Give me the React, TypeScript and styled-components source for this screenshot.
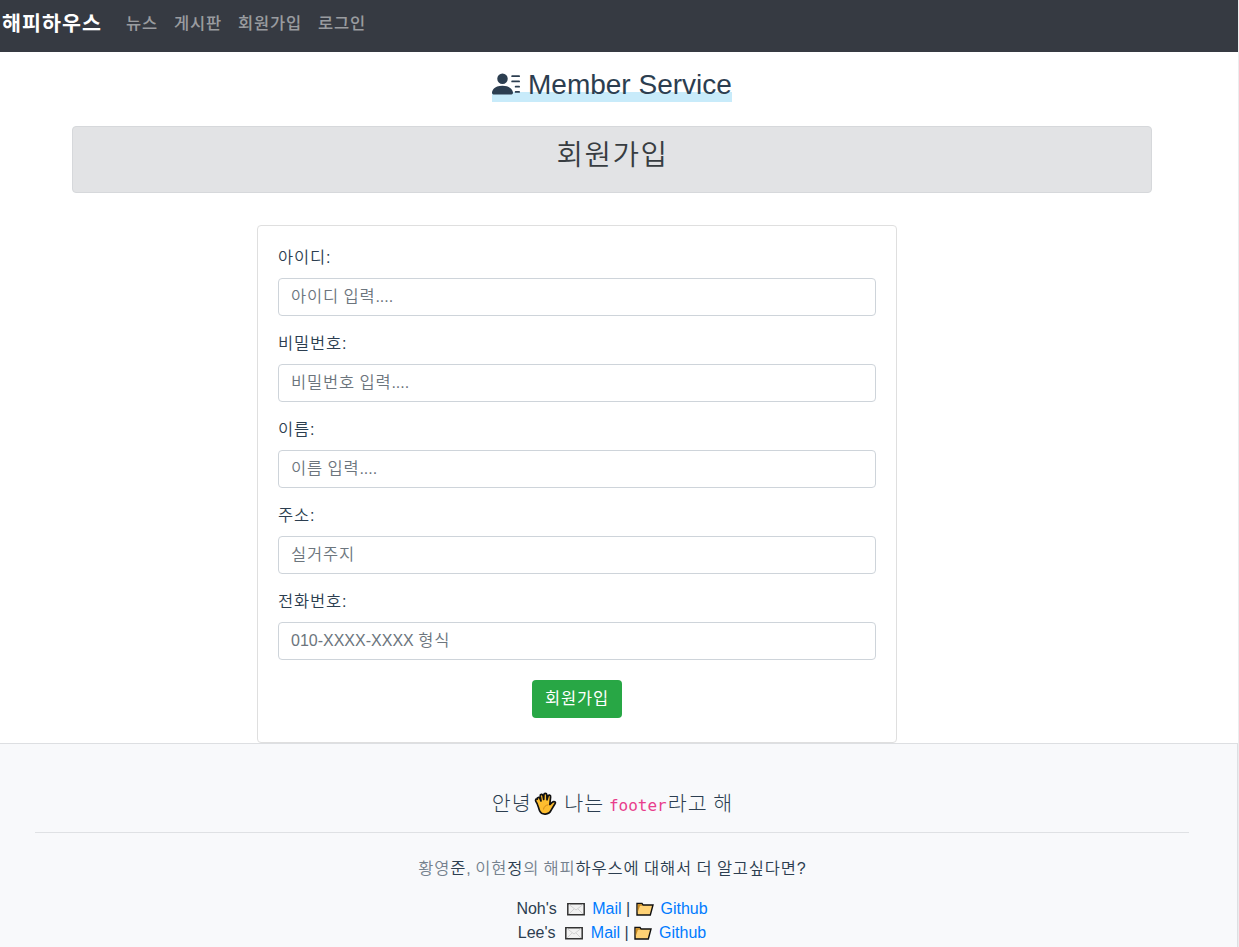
import React from "react";
import styled, { createGlobalStyle } from "styled-components";
import { BsPersonLinesFill } from "react-icons/bs";

const GlobalStyle = createGlobalStyle`
  * { box-sizing: border-box; }
  body {
    margin: 0;
    overflow: hidden;
    background: #fff;
    color: #2c3e50;
    font-family: "Liberation Sans", "Noto Sans CJK KR", sans-serif;
    font-size: 16px;
    line-height: 24px;
  }
`;

const Page = styled.div`
  display: flex;
  flex-direction: column;
  height: 947px;
  border-right: 1px solid #ececee;
`;

const Hangul = styled.span`
  font-size: 1.03em;
  letter-spacing: 0.0509em;
`;

const Navbar = styled.nav`
  display: flex;
  align-items: flex-start;
  gap: 16px;
  flex: none;
  height: 52px;
  padding: 11px 2px 0;
  background: #363a42;
  font-weight: 500;
`;

const Brand = styled.a`
  height: 24px;
  margin-right: 8px;
  color: #fff;
  font-size: 20px;
  font-weight: 700;
  line-height: 26px;
`;

const NavLink = styled.a`
  color: rgba(255, 255, 255, 0.5);
`;

const Container = styled.main`
  display: flex;
  flex-direction: column;
  align-items: center;
  flex: none;
  width: 1080px;
  height: 691px;
  margin-left: 72px;
  padding-top: 16px;
`;

const Title = styled.h2`
  display: flex;
  gap: 8px;
  width: 240px;
  height: 34px;
  margin: 0 0 24px;
  background: linear-gradient(to top, #c8ebfa 10px, transparent 10px);
  font-size: 28px;
  font-weight: 400;
  line-height: 33px;
  white-space: nowrap;

  svg {
    flex: none;
    margin-top: 2px;
  }
`;

const Banner = styled.div`
  width: 100%;
  height: 67px;
  margin-bottom: 32px;
  padding: 11px 0 0 1px;
  border: 1px solid #d6d8db;
  border-radius: 4px;
  background: #e2e3e5;
  color: #383d41;
  font-size: 28px;
  font-weight: 350;
  line-height: 34px;
  text-align: center;
`;

const Card = styled.form`
  display: flex;
  flex-direction: column;
  gap: 16px;
  width: 640px;
  height: 518px;
  margin-right: 70px;
  padding: 20px;
  border: 1px solid #dfdfdf;
  border-radius: 4px;
  font-weight: 350;
`;

const Group = styled.label`
  display: flex;
  flex-direction: column;
  gap: 8px;
`;

const Caption = styled.span`
  height: 24px;
  line-height: 22px;
`;

const Field = styled.span`
  display: grid;
  height: 38px;
  border: 1px solid #ced4da;
  border-radius: 4px;
`;

const Input = styled.input`
  grid-area: 1 / 1;
  min-width: 0;
  padding: 6px 12px;
  border: 0;
  background: transparent;
  font: inherit;
`;

const Hint = styled.span`
  grid-area: 1 / 1;
  padding: 5px 12px;
  color: #6c757d;
`;

const Submit = styled.button`
  align-self: center;
  width: 90px;
  height: 38px;
  margin-top: 4px;
  padding: 0 0 4px;
  border: 0;
  border-radius: 4px;
  background: #28a745;
  color: #fff;
  font: 400 16px/24px "Noto Sans CJK KR", sans-serif;
`;

const Footer = styled.footer`
  flex: 1;
  padding: 48px 48px 0 35px;
  border: 1px solid #dddfe2;
  border-width: 1px 1px 0 0;
  background: #f8f9fb;
  font-weight: 350;
  text-align: center;
`;

const Greeting = styled.div`
  display: flex;
  justify-content: center;
  height: 24px;
  padding-left: 1px;
  font-size: 20px;
  font-weight: 300;
  white-space: pre;

  svg {
    margin: 0 2px 0 2px;
  }
`;

const Code = styled.code`
  margin: 0 1px 0 -1px;
  color: #e83e8c;
  font: 400 16px/27px "DejaVu Sans Mono", monospace;
`;

const Divider = styled.hr`
  margin: 16px 0 23px;
  border: 0;
  border-top: 1px solid #dfe1e4;
`;

const Question = styled.p`
  height: 24px;
  margin: 0 0 17px;
`;

const Muted = styled.span`
  color: #75818d;
`;

const ContactRow = styled.div`
  display: flex;
  justify-content: center;
  white-space: pre;

  svg {
    flex: none;
  }
`;

const Link = styled.a<{ $gap: number }>`
  margin-left: ${(p) => p.$gap}px;
  color: #007bff;
`;

const ko = (text: string) =>
  text
    .split(/([가-힣]+)/)
    .map((part, i) => (i % 2 ? <Hangul key={i}>{part}</Hangul> : part));

const HandIcon = () => (
  <svg width="23" height="24" viewBox="0 0 23 24">
    <path
      d="M3.2 7.2c-.3-2 2-2.3 2.6-.7L7 9 6.2 4.2C6 2 8.500 1.700 9 3.700L9.700 7.500 9.900 2.800C10 .9 12.600.9 12.800 2.800L13 7.800 14 4.200c.5-1.900 2.900-1.300 2.600.6L15.800 12.500l2.400-2.200c1.600-1.400 4.200-.4 2.800 1.400l-4 6.700c-1.900 4.500-9.300 5-11.300.6C4.300 16 4.200 12.300 1.900 9.500.9 7.600 2.300 6.500 3.200 7.200z"
      fill="#fdbd2f"
      stroke="#111"
      strokeWidth="1.700"
      strokeLinejoin="round"
    />
    <path d="M9.500 17.500c.3-2.600 2-4.300 4.800-4.700" fill="none" stroke="#d98b16" />
  </svg>
);

const MailIcon = () => (
  <svg width="20" height="24" viewBox="0 0 20 24">
    <path d="M1.800 6.700h16.400v11H1.800z" fill="#f1f1f1" stroke="#333" strokeWidth="1.500" />
    <path d="M3 7.500l7 5.500 7-5.500M3 17l5-5M17 17l-5-5" fill="none" stroke="#d2d2d2" />
  </svg>
);

const FolderIcon = () => (
  <svg width="20" height="24" viewBox="0 0 20 24">
    <path
      d="M2 6.500v11.500h13.300L18 8H8L7 6.500z"
      fill="#ffd275"
      stroke="#111"
      strokeWidth="1.400"
    />
    <path d="M2.800 7.300h3.700l1 1.400H5L2.800 15z" fill="#c98b22" />
  </svg>
);

const NAV = ["뉴스", "게시판", "회원가입", "로그인"];

const FIELDS = [
  { label: "아이디:", hint: "아이디 입력...." },
  { label: "비밀번호:", hint: "비밀번호 입력...." },
  { label: "이름:", hint: "이름 입력...." },
  { label: "주소:", hint: "실거주지" },
  { label: "전화번호:", hint: "010-XXXX-XXXX 형식" },
];

const CONTACTS = ["Noh's", "Lee's"];

export default function App() {
  return (
    <Page>
      <GlobalStyle />
      <Navbar>
        <Brand>{ko("해피하우스")}</Brand>
        {NAV.map((item) => (
          <NavLink key={item}>{ko(item)}</NavLink>
        ))}
      </Navbar>
      <Container>
        <Title>
          <BsPersonLinesFill size={28} />
          <span>Member Service</span>
        </Title>
        <Banner>{ko("회원가입")}</Banner>
        <Card>
          {FIELDS.map((field) => (
            <Group key={field.label}>
              <Caption>{ko(field.label)}</Caption>
              <Field>
                <Hint>{ko(field.hint)}</Hint>
                <Input />
              </Field>
            </Group>
          ))}
          <Submit type="button">{ko("회원가입")}</Submit>
        </Card>
      </Container>
      <Footer>
        <Greeting>
          <span>{ko("안녕")}</span>
          <HandIcon />
          <span> {ko("나는")} </span>
          <Code>footer</Code>
          <span>{ko("라고 해")}</span>
        </Greeting>
        <Divider />
        <Question>
          <Muted>{ko("황영")}</Muted>
          {ko("준")}
          <Muted>{ko(", 이현")}</Muted>
          {ko("정")}
          <Muted>{ko("의 해피")}</Muted>
          {ko("하우스에 대해서 더 알고싶다면?")}
        </Question>
        {CONTACTS.map((name) => (
          <ContactRow key={name}>
            <span>{name}  </span>
            <MailIcon />
            <Link $gap={2}> Mail </Link>
            <span>| </span>
            <FolderIcon />
            <Link $gap={-3}>  Github</Link>
          </ContactRow>
        ))}
      </Footer>
    </Page>
  );
}
